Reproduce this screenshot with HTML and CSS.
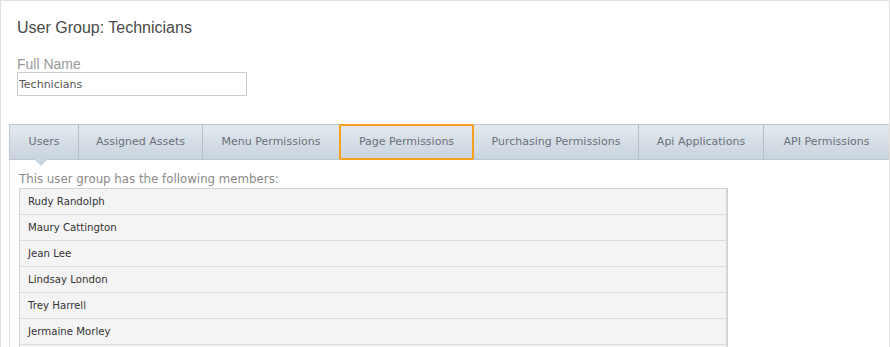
FILE: index.html
```html
<!DOCTYPE html>
<html lang="en">
<head>
  <meta charset="UTF-8" />
  <title>User Group: Technicians</title>
  <link rel="stylesheet" href="styles.css">
</head>
<body>
  <div class="page">
    <h1 class="title">User Group: Technicians</h1>

    <div class="field">
      <label class="label" for="fullname">Full Name</label>
      <input type="text" id="fullname" class="input" value="Technicians" />
    </div>

    <div class="tabs">
      <div class="tab active">Users</div>
      <div class="tab">Assigned Assets</div>
      <div class="tab">Menu Permissions</div>
      <div class="tab highlight">Page Permissions</div>
      <div class="tab">Purchasing Permissions</div>
      <div class="tab">Api Applications</div>
      <div class="tab">API Permissions</div>
    </div>

    <div class="panel">
      <p class="intro">This user group has the following members:</p>
      <ul class="members">
        <li>Rudy Randolph</li>
        <li>Maury Cattington</li>
        <li>Jean Lee</li>
        <li>Lindsay London</li>
        <li>Trey Harrell</li>
        <li>Jermaine Morley</li>
        <li>&nbsp;</li>
      </ul>
    </div>
  </div>
</body>
</html>
```

FILE: styles.css
```css
/* Page frame */
body {
  margin: 0;
  background: #fff;
  font-family: "Liberation Sans", Arial, sans-serif;
}

.page {
  box-sizing: border-box;
  width: 890px;
  height: 347px;
  border: 1px solid #e0e0e0;
  border-bottom: none;
  overflow: hidden;
}

.title {
  margin: 17px 0 0 16px;
  font-size: 16px;
  line-height: 20px;
  font-weight: normal;
  color: #4a4a4a;
}

/* Full name field */
.field {
  margin: 18px 0 0 16px;
}

.label {
  display: block;
  font-size: 14px;
  line-height: 16px;
  color: #999;
}

.input {
  box-sizing: border-box;
  display: block;
  width: 230px;
  height: 24px;
  margin: 0;
  padding: 0 1px;
  border: 1px solid #ccc;
  font-family: "DejaVu Sans", Verdana, sans-serif;
  font-size: 11px;
  color: #555;
}

/* Tab strip */
.tabs {
  display: flex;
  margin: 28px 0 0 8px;
  height: 34px;
  border: 1px solid #b9c6d1;
  border-right: none;
  background: linear-gradient(#e3e9ee, #c9d4dd);
}

.tab {
  position: relative;
  box-sizing: border-box;
  height: 100%;
  line-height: 34px;
  text-align: center;
  font-family: "DejaVu Sans", Verdana, sans-serif;
  font-size: 11px;
  color: #69707a;
  border-right: 1px solid #b3c0cc;
}

.tab:nth-child(1) { width: 69px; }
.tab:nth-child(2) { width: 124px; }
.tab:nth-child(3) { width: 137px; }
.tab:nth-child(4) { width: 134px; }
.tab:nth-child(5) { width: 165px; }
.tab:nth-child(6) { width: 125px; }
.tab:nth-child(7) { flex: 1; border-right: none; }

.tab.active::after {
  content: "";
  position: absolute;
  left: 24px;
  bottom: -7px;
  border-left: 7px solid transparent;
  border-right: 7px solid transparent;
  border-top: 7px solid #c9d4dd;
}

.tab.highlight::before {
  content: "";
  position: absolute;
  left: -1px;
  top: -1px;
  right: -1px;
  bottom: -1px;
  border: 2px solid #f6a21e;
  border-radius: 2px;
}

/* Members panel */
.panel {
  margin-left: 8px;
  padding: 11px 0 0 9px;
  height: 200px;
  border-left: 1px solid #dcdcdc;
}

.intro {
  margin: 0;
  font-family: "DejaVu Sans", Verdana, sans-serif;
  font-size: 11.8px;
  line-height: 17px;
  color: #8a8a8a;
}

.members {
  list-style: none;
  margin: 0;
  padding: 0;
  width: 706px;
  border: 1px solid #d4d4d8;
  border-right-width: 2px;
  background: #f4f4f4;
}

.members li {
  height: 25px;
  line-height: 25px;
  padding-left: 8px;
  border-bottom: 1px solid #dcdcdc;
  font-family: "DejaVu Sans", Verdana, sans-serif;
  font-size: 10.2px;
  color: #333;
}
```
